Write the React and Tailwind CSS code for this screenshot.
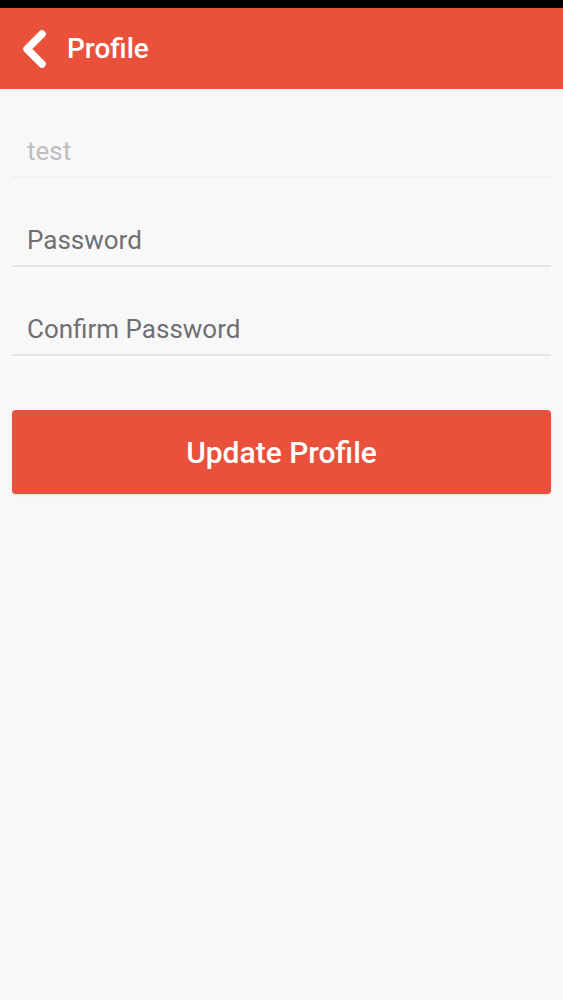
import React, { useState } from 'react';

function Field({ value, placeholder, type = 'text', onChange, disabled, faint }) {
  return (
    <div className={`h-[89px] flex items-end pb-[9px] border-b-2 ${faint ? 'border-[#f1f1f2]' : 'border-[#e4e4e6]'}`}>
      <input
        type={type}
        value={value}
        disabled={disabled}
        placeholder={placeholder}
        onChange={onChange}
        className={`w-full bg-transparent outline-none pl-[15px] text-[26px] leading-[32px] font-['Roboto',sans-serif] placeholder-[#6f6f73] ${disabled ? 'text-[#bdbdc0]' : 'text-[#444]'}`}
      />
    </div>
  );
}

export default function App() {
  const [password, setPassword] = useState('');
  const [confirm, setConfirm] = useState('');

  return (
    <div className="min-h-screen bg-[#f9f8f9] font-['Roboto',sans-serif]">
      {/* status bar */}
      <div className="h-2 bg-black"></div>

      <header className="h-[81px] bg-[#ea513a] flex items-center pl-[19px]">
        <button className="w-[28px] h-[40px] flex items-center justify-center">
          <svg width="28" height="40" viewBox="0 0 28 40" fill="none">
            <polyline points="23,5 8,20 23,35" stroke="#fff" strokeWidth="7.5" strokeLinecap="round" strokeLinejoin="round" />
          </svg>
        </button>
        <h1 className="ml-[20px] text-white text-[28px] font-medium leading-none">Profile</h1>
      </header>

      <div className="px-3">
        <Field value="test" disabled faint />
        <Field type="password" placeholder="Password" value={password} onChange={(e) => setPassword(e.target.value)} />
        <Field type="password" placeholder="Confirm Password" value={confirm} onChange={(e) => setConfirm(e.target.value)} />

        <button className="mt-[54px] w-full h-[84px] rounded bg-[#ea513a] text-white text-[30px] font-medium shadow-sm">
          Update Profile
        </button>
      </div>
    </div>
  );
}
